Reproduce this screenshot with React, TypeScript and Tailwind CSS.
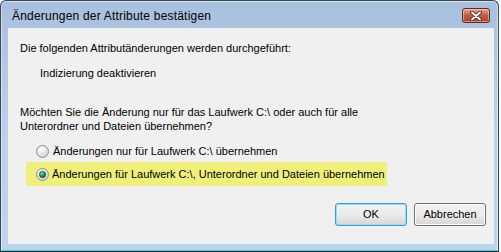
import React from "react";

const font = { fontFamily: '"Liberation Sans", Arial, sans-serif' };

const Radio = ({ checked }: { checked?: boolean }) => (
  <svg width="13" height="13" viewBox="0 0 13 13" className="shrink-0">
    <defs>
      <radialGradient id={checked ? "rg1" : "rg0"} cx="40%" cy="35%" r="70%">
        <stop offset="0%" stopColor="#ffffff" />
        <stop offset="100%" stopColor="#cfcfcf" />
      </radialGradient>
      <radialGradient id="dot" cx="40%" cy="35%" r="70%">
        <stop offset="0%" stopColor="#7fe0a0" />
        <stop offset="60%" stopColor="#1b8a4a" />
        <stop offset="100%" stopColor="#0b4a28" />
      </radialGradient>
    </defs>
    <circle cx="6.5" cy="6.5" r="6" fill={`url(#${checked ? "rg1" : "rg0"})`} stroke="#8e8f8f" strokeWidth="1" />
    {checked && <circle cx="6.5" cy="6.5" r="3.2" fill="url(#dot)" stroke="#245a3a" strokeWidth="0.6" />}
  </svg>
);

export default function App() {
  return (
    <div className="w-[501px] h-[252px] bg-white" style={font}>
      <div className="w-[499px] h-[252px] flex flex-col rounded-t-[6px] border border-[#3b4656] border-b-0 bg-gradient-to-b from-[#a7c0dd] via-[#bad1ea] to-[#bcd4ec] shadow-[inset_0_0_0_1px_rgba(255,255,255,0.5)]">
        <div className="h-[27px] flex items-center pl-[11px] pr-[8px] pt-[2px]">
          <span className="text-[12px] text-black flex-1 tracking-[0.2px]">Änderungen der Attribute bestätigen</span>
          <div className="w-[28px] h-[15px] rounded-[3px] border border-[#5a2a2a] bg-gradient-to-b from-[#e7a591] via-[#c85a44] to-[#b8402b] flex items-center justify-center shadow-[inset_0_0_0_1px_rgba(255,220,210,0.5)]">
            <svg width="12" height="10" viewBox="0 0 12 10">
              <path d="M2 1.5 L10 8.5 M10 1.5 L2 8.5" stroke="#3a1b1b" strokeWidth="3.6" strokeLinecap="round" />
              <path d="M2 1.5 L10 8.5 M10 1.5 L2 8.5" stroke="#ffffff" strokeWidth="2" strokeLinecap="round" />
            </svg>
          </div>
        </div>
        <div className="flex-1 ml-[7px] mr-[4px] mb-[6px] bg-[#f0f0f0] flex flex-col text-[11px] text-black">
          <div className="pl-[12px] pt-[13px] leading-[14px]">Die folgenden Attributänderungen werden durchgeführt:</div>
          <div className="pl-[32px] pt-[11px] leading-[14px]">Indizierung deaktivieren</div>
          <div className="pl-[12px] pt-[25px] leading-[14px]">
            Möchten Sie die Änderung nur für das Laufwerk C:\ oder auch für alle
            <br />
            Unterordner und Dateien übernehmen?
          </div>
          <div className="pl-[28px] mt-[11px] flex items-center gap-[4px] h-[14px]">
            <Radio />
            <span>Änderungen nur für Laufwerk C:\ übernehmen</span>
          </div>
          <div className="ml-[18px] mt-[4px] w-[361px] h-[24px] bg-[#eff07b] pl-[10px] flex items-center gap-[3px]">
            <Radio checked />
            <span>Änderungen für Laufwerk C:\, Unterordner und Dateien übernehmen</span>
          </div>
          <div className="flex justify-end gap-[7px] pr-[8px] pt-[17px]">
            <button className="w-[72px] h-[23px] rounded-[3px] border border-[#3c9ad8] bg-gradient-to-b from-[#f2f2f2] via-[#ebebeb] to-[#d6d6d6] shadow-[inset_0_0_0_1px_#8fe0f8] text-[11px]">
              OK
            </button>
            <button className="w-[72px] h-[23px] rounded-[3px] border border-[#707070] bg-gradient-to-b from-[#f2f2f2] via-[#ebebeb] to-[#d6d6d6] shadow-[inset_0_0_0_1px_#fcfcfc] text-[11px]">
              Abbrechen
            </button>
          </div>
        </div>
        <div className="h-[1px] bg-[#3fd6e8]" />
        <div className="h-[1px] bg-[#1a2330]" />
      </div>
    </div>
  );
}
